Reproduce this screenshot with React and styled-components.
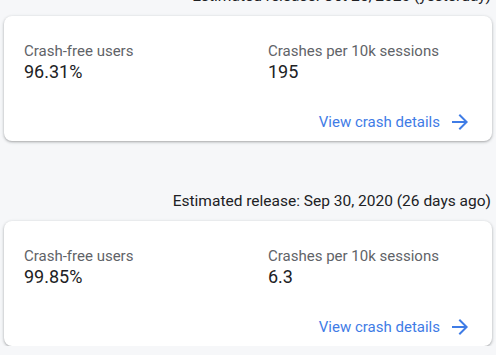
import React from "react";
import styled, { createGlobalStyle } from "styled-components";

const Global = createGlobalStyle`
  html, body { margin: 0; padding: 0; background: #f6f7f9; }
  body { font-family: Roboto, "Noto Sans", Arial, sans-serif; overflow: hidden; }
`;

const List = styled.div`
  display: flex;
  flex-direction: column;
  gap: 50px;
  padding: 0 4px;
  margin-top: -14px;
`;

const Section = styled.section`
  display: flex;
  flex-direction: column;
  gap: 10px;
`;

const ReleaseLine = styled.div`
  text-align: right;
  font-size: 15.5px;
  line-height: 20px;
  color: #202124;
  padding-right: 1px;
`;

const Card = styled.div`
  background: #fff;
  border-radius: 8px;
  box-shadow: 0 1px 2px rgba(60, 64, 67, 0.3), 0 1px 3px 1px rgba(60, 64, 67, 0.12);
  padding: 26px 20px 7px 20px;
  display: flex;
  flex-direction: column;
  gap: 26px;
`;

const Metrics = styled.div`
  display: grid;
  grid-template-columns: 1fr 1fr;
  column-gap: 40px;
`;

const Metric = styled.div`
  display: flex;
  flex-direction: column;
`;

const Label = styled.div`
  font-size: 15px;
  line-height: 18px;
  color: #5f6368;
`;

const Value = styled.div`
  font-size: 18px;
  line-height: 24px;
  color: #202124;
`;

const LinkRow = styled.div`
  display: flex;
  justify-content: flex-end;
`;

const Link = styled.a`
  display: flex;
  align-items: center;
  gap: 8px;
  height: 24px;
  font-size: 15px;
  color: #3f7ce6;
  text-decoration: none;
  cursor: pointer;
`;

const Arrow = () => (
  <svg width="24" height="24" viewBox="0 0 24 24" fill="#3f7ce6">
    <path d="M12 4l-1.41 1.41L16.17 11H4v2h12.17l-5.58 5.59L12 20l8-8z" />
  </svg>
);

const releases = [
  { date: "Oct 25, 2020 (yesterday)", users: "96.31%", crashes: "195" },
  { date: "Sep 30, 2020 (26 days ago)", users: "99.85%", crashes: "6.3" },
];

export default function App() {
  return (
    <>
      <Global />
      <List>
        {releases.map((r) => (
          <Section key={r.date}>
            <ReleaseLine>Estimated release: {r.date}</ReleaseLine>
            <Card>
              <Metrics>
                <Metric>
                  <Label>Crash-free users</Label>
                  <Value>{r.users}</Value>
                </Metric>
                <Metric>
                  <Label>Crashes per 10k sessions</Label>
                  <Value>{r.crashes}</Value>
                </Metric>
              </Metrics>
              <LinkRow>
                <Link>
                  View crash details
                  <Arrow />
                </Link>
              </LinkRow>
            </Card>
          </Section>
        ))}
      </List>
    </>
  );
}
